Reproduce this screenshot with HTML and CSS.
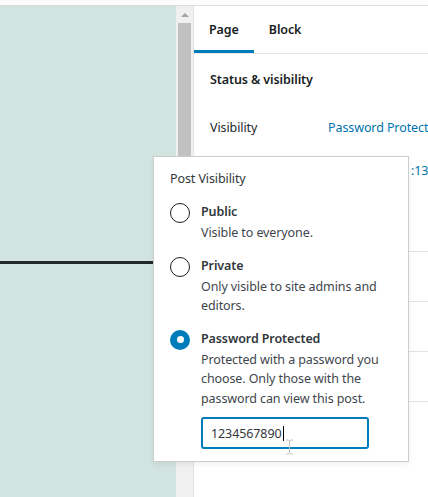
FILE: index.html
```html
<!DOCTYPE html>
<html lang="en">
<head>
<meta charset="utf-8">
<title>Post Visibility</title>
<link rel="stylesheet" href="styles.css">
</head>
<body>
<div class="app">
  <div class="topline"></div>
  <div class="main">
    <div class="canvas"><div class="rule"></div></div>
    <div class="scrollbar"><div class="arrow"></div><div class="thumb"></div></div>
    <aside class="sidebar">
      <div class="tabs">
        <button class="tab active">Page</button>
        <button class="tab">Block</button>
      </div>
      <section class="panel status">
        <h2 class="panel-title">Status &amp; visibility</h2>
        <div class="row"><span class="label">Visibility</span><span class="value">Password Protected</span></div>
        <div class="row"><span class="label">Publish</span><span class="value">Feb 9, 2020 11:13 am</span></div>
      </section>
      <section class="panel"><h2 class="panel-title">Permalink</h2></section>
      <section class="panel"><h2 class="panel-title">Featured image</h2></section>
      <section class="panel"><h2 class="panel-title">Discussion</h2></section>
      <section class="panel last">
        <h2 class="panel-title">Page Attributes</h2>
        <p class="attr">Parent Page:</p>
      </section>
    </aside>
  </div>

  <div class="popover">
    <div class="legend">Post Visibility</div>
    <div class="choice">
      <span class="radio"></span>
      <div class="choice-text">
        <div class="choice-title">Public</div>
        <div class="choice-desc">Visible to everyone.</div>
      </div>
    </div>
    <div class="choice">
      <span class="radio"></span>
      <div class="choice-text">
        <div class="choice-title">Private</div>
        <div class="choice-desc">Only visible to site admins and editors.</div>
      </div>
    </div>
    <div class="choice">
      <span class="radio checked"></span>
      <div class="choice-text">
        <div class="choice-title">Password Protected</div>
        <div class="choice-desc">Protected with a password you choose. Only those with the password can view this post.</div>
      </div>
    </div>
    <div class="field"><span class="field-value">1234567890</span><span class="caret"></span></div>
    <svg class="ibeam" width="9" height="16" viewBox="0 0 9 16"><path d="M1 1h2.5l1 1 1-1H8M4.5 2v12M1 15h2.5l1-1 1 1H8" fill="none" stroke="#c4c4c4" stroke-width="1"/></svg>
  </div>
</div>
</body>
</html>
```

FILE: styles.css
```css
* { box-sizing: border-box; }

html, body {
  margin: 0;
  padding: 0;
}

body {
  width: 428px;
  height: 497px;
  overflow: hidden;
  background: #fff;
  font-family: "Noto Sans", "Open Sans", sans-serif;
  font-size: 12.5px;
  letter-spacing: -0.1px;
  color: #23282d;
}

.app {
  position: relative;
  width: 428px;
  height: 497px;
  overflow: hidden;
}

.topline {
  height: 6px;
  background: #fdfdfd;
  border-bottom: 1px solid #dcdcde;
}

.main {
  display: flex;
  height: 491px;
}

.canvas {
  flex: 0 0 176px;
  background: #d2e4df;
  padding-top: 255px;
}

.rule {
  height: 3px;
  background: #23282d;
}

.scrollbar {
  flex: 0 0 17px;
  background: #f0f0f0;
  padding: 7px 2px 0;
  display: flex;
  flex-direction: column;
  align-items: center;
}

.arrow {
  width: 0;
  height: 0;
  border-left: 4px solid transparent;
  border-right: 4px solid transparent;
  border-bottom: 4px solid #a3a3a3;
}

.thumb {
  margin-top: 6px;
  width: 13px;
  height: 420px;
  background: #c1c1c1;
}

.sidebar {
  flex: 1 1 auto;
  min-width: 0;
  border-left: 1px solid #e2e4e7;
  overflow: hidden;
}

.tabs {
  display: flex;
  height: 48px;
  border-bottom: 1px solid #e2e4e7;
}

.tab {
  font: 600 12.5px/20px "Noto Sans", "Open Sans", sans-serif;
  letter-spacing: -0.1px;
  color: #191e23;
  background: none;
  border: 0;
  padding: 0 15px;
  height: 47px;
  cursor: pointer;
}

.tab.active {
  box-shadow: inset 0 -3px 0 #007cba;
}

.panel {
  border-bottom: 1px solid #e2e4e7;
}

.panel-title {
  margin: 0;
  font-size: 12.5px;
  font-weight: 600;
  line-height: 19px;
  padding: 15px 16px;
  color: #191e23;
  white-space: nowrap;
}

.status {
  padding-bottom: 59px;
}

.status .panel-title {
  line-height: 20px;
  padding: 16px 16px;
}

.row {
  display: flex;
  align-items: center;
  height: 43px;
  padding-left: 16px;
  white-space: nowrap;
}

.label {
  flex: 0 0 118px;
  color: #23282d;
}

.value {
  color: #0073aa;
}

.panel.last {
  border-bottom: 0;
}

.attr {
  margin: 42px 16px 0;
  font-weight: 600;
  color: #555d66;
}

/* popover */
.popover {
  position: absolute;
  left: 153px;
  top: 156px;
  width: 256px;
  height: 306px;
  background: #fff;
  border: 1px solid #cdcdcd;
  box-shadow: 0 3px 6px rgba(0, 0, 0, 0.06);
  padding: 12px 16px 0;
}

.legend {
  line-height: 20px;
  color: #32373c;
  margin-bottom: 13px;
}

.choice {
  display: flex;
  gap: 11px;
  margin-bottom: 13px;
}

.radio {
  flex: 0 0 20px;
  width: 20px;
  height: 20px;
  margin-top: 1px;
  border: 1.5px solid #1e1e1e;
  border-radius: 50%;
  position: relative;
}

.radio.checked {
  border: 0;
  background: #007cba;
}

.radio.checked::after {
  content: "";
  position: absolute;
  left: 6.5px;
  top: 6.5px;
  width: 7px;
  height: 7px;
  border-radius: 50%;
  background: #fff;
}

.choice-title {
  font-weight: 600;
  line-height: 20px;
  margin-bottom: 1px;
  color: #32373c;
}

.choice-desc {
  line-height: 19.5px;
  color: #40464d;
}

.field {
  margin: -4px 0 0 31px;
  width: 168px;
  height: 32px;
  border: 2px solid #007cba;
  border-radius: 3px;
  padding: 0 8px;
  display: flex;
  align-items: center;
  color: #32373c;
}

.caret {
  width: 1px;
  height: 15px;
  background: #000;
  margin-left: 1px;
}

.ibeam {
  position: absolute;
  left: 131px;
  top: 282px;
}
```
